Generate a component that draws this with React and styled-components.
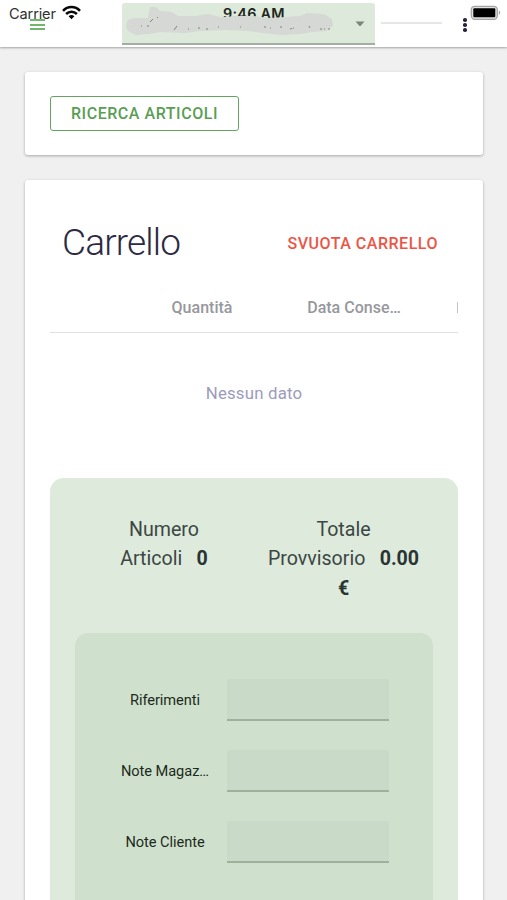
import React from 'react';
import styled, { createGlobalStyle } from 'styled-components';

const GlobalStyle = createGlobalStyle`
  * { box-sizing: border-box; }
  html, body { margin: 0; height: 900px; overflow: hidden; background: #f0f0f0; }
  body { font-family: Roboto, sans-serif; color: #2f3a38; }
`;

const Page = styled.div`
  position: relative;
  width: 507px;
  height: 900px;
  overflow: hidden;
  background: #f0f0f0;
`;

const Header = styled.header`
  display: flex;
  height: 47px;
  padding-left: 30px;
  background: #fff;
  box-shadow: 0 1px 2px rgba(0, 0, 0, 0.32);
`;

const MenuButton = styled.div`
  display: flex;
  flex-direction: column;
  gap: 2.5px;
  width: 15px;
  margin-top: 19px;
`;

const MenuBar = styled.span`
  height: 2px;
  background: #72b56e;
`;

const CustomerSelect = styled.div`
  width: 253px;
  height: 42px;
  margin: 3px 0 0 77px;
  border-bottom: 2px solid #a1aea1;
  border-radius: 3px 3px 0 0;
  background: #dde9da;
`;

const HeaderRule = styled.div`
  width: 61px;
  height: 2px;
  margin: 22px 0 0 6px;
  background: #e6e6e7;
`;

const MoreButton = styled.div`
  display: flex;
  flex-direction: column;
  gap: 1.5px;
  margin: 18px 0 0 21px;
`;

const Dot = styled.span`
  width: 3.6px;
  height: 3.6px;
  border-radius: 50%;
  background: #25263d;
`;

const StatusBar = styled.div`
  position: absolute;
  inset: 0 0 auto 0;
  height: 45px;
`;

const Carrier = styled.span`
  position: absolute;
  left: 9px;
  top: 5px;
  font: 14.6px/18px Inter, sans-serif;
  letter-spacing: -0.15px;
  color: #303030;
`;

const Clock = styled.span`
  position: absolute;
  left: 223px;
  top: 5px;
  font: 600 14.4px/18px Inter, sans-serif;
  letter-spacing: 0.25px;
  white-space: nowrap;
  color: #202520;
`;

const StatusIcon = styled.svg`
  position: absolute;
  left: ${(p) => p.$x}px;
  top: ${(p) => p.$y}px;
`;

const Main = styled.main`
  display: flex;
  flex-direction: column;
  gap: 25px;
  padding: 24.5px 24.5px 0 25px;
`;

const Card = styled.section`
  height: ${(p) => p.$height}px;
  padding: 24.5px 24.5px 24.5px 25px;
  border-radius: 3px;
  background: #fff;
  box-shadow: 0 1px 3px rgba(0, 0, 0, 0.3);
`;

const SearchButton = styled.button`
  display: block;
  width: 189px;
  height: 35px;
  padding: 0;
  border: 1.5px solid #65a361;
  border-radius: 3px;
  background: #fff;
  font: 500 16px/32px Roboto, sans-serif;
  letter-spacing: 0.55px;
  color: #5a9e54;
`;

const CartHeader = styled.div`
  display: flex;
  align-items: center;
  justify-content: space-between;
  height: 77px;
  padding: 0 20px 0 12px;
`;

const Title = styled.h1`
  margin: 0;
  font-size: 37px;
  font-weight: 300;
  letter-spacing: -0.85px;
  color: #2c2a43;
`;

const ClearButton = styled.button`
  padding: 2px 0 0;
  border: 0;
  background: none;
  font: 500 16px/24px Roboto, sans-serif;
  letter-spacing: 0.52px;
  color: #ec5546;
`;

const TableHead = styled.div`
  display: grid;
  grid-template-columns: 76px 152px 152px 152px;
  height: 52px;
  padding-top: 1px;
  overflow: hidden;
  border-bottom: 1.5px solid #e1e1e2;
  font-size: 16px;
  font-weight: 500;
  line-height: 51px;
  color: #96989c;
`;

const HeadCell = styled.span`
  text-align: center;
`;

/* Edge of the next column, visible where the table scrolls out of view */
const ColumnEdge = styled.span`
  width: 1px;
  height: 11px;
  margin: 20px 0 0 27px;
  background: #c3c4c7;
`;

const EmptyState = styled.div`
  height: 145px;
  padding-bottom: 26px;
  display: flex;
  align-items: center;
  justify-content: center;
  font-size: 16.8px;
  letter-spacing: 0.2px;
  color: #9c9bbb;
`;

const Summary = styled.div`
  height: 520px;
  padding: 37px 25px 0 24.5px;
  border-radius: 14px;
  background: #deeadc;
`;

const Totals = styled.div`
  display: grid;
  grid-template-columns: 179px 180px;
  height: 118px;
  font-size: 19.6px;
  line-height: 29.3px;
  text-align: center;
  color: #3b4744;
`;

const Total = styled.div`
  padding: 0 10px;
`;

const Amount = styled.b`
  margin-left: ${(p) => (p.$inline ? 9.5 : 0)}px;
  font-weight: 700;
  color: #2a3433;
`;

const Form = styled.div`
  display: flex;
  flex-direction: column;
  gap: 29px;
  height: 400px;
  padding: 45px 45px 0;
  border-radius: 13px;
  background: #cfe1cd;
`;

const Field = styled.label`
  display: grid;
  grid-template-columns: 91px 161.5px;
  column-gap: 16.5px;
  align-items: center;
  height: 42px;
  font-size: 14.6px;
  line-height: 20px;
  text-align: center;
  color: #1c2a20;
`;

const FieldName = styled.span`
  letter-spacing: -0.05px;
  white-space: nowrap;
`;

const FieldInput = styled.input`
  width: 161.5px;
  height: 42px;
  margin-top: 1px;
  padding: 0 12px;
  border: 0;
  border-bottom: 2px solid #9db19d;
  border-radius: 3px 3px 0 0;
  outline: 0;
  background: #c9dac8;
`;

const fields = ['Riferimenti', 'Note Magaz…', 'Note Cliente'];

export default function App() {
  return (
    <>
      <GlobalStyle />
      <Page>
        <Header>
          <MenuButton><MenuBar /><MenuBar /><MenuBar /></MenuButton>
          <CustomerSelect />
          <HeaderRule />
          <MoreButton><Dot /><Dot /><Dot /></MoreButton>
        </Header>
        <Main>
          <Card $height={83}>
            <SearchButton>RICERCA ARTICOLI</SearchButton>
          </Card>
          <Card $height={900}>
            <CartHeader>
              <Title>Carrello</Title>
              <ClearButton>SVUOTA CARRELLO</ClearButton>
            </CartHeader>
            <TableHead>
              <HeadCell />
              <HeadCell>Quantità</HeadCell>
              <HeadCell>Data Conse…</HeadCell>
              <ColumnEdge />
            </TableHead>
            <EmptyState>Nessun dato</EmptyState>
            <Summary>
              <Totals>
                <Total>Numero<br />Articoli <Amount $inline>0</Amount></Total>
                <Total>Totale<br />Provvisorio <Amount $inline>0.00</Amount><br /><Amount>€</Amount></Total>
              </Totals>
              <Form>
                {fields.map((name) => (
                  <Field key={name}><FieldName>{name}</FieldName><FieldInput /></Field>
                ))}
              </Form>
            </Summary>
          </Card>
        </Main>
        <StatusBar>
          <Carrier>Carrier</Carrier>
          <StatusIcon $x={62} $y={5} width="19" height="16" viewBox="0 0 19 16">
            <g fill="none" stroke="#080808" strokeWidth="2.5">
              <path d="M1 5.9C5.8 .8 13.2 .8 18 5.9" />
              <path d="M4.1 9C7.2 5.9 11.8 5.9 14.9 9" />
            </g>
            <path d="M6.6 11.2Q9.5 8.9 12.4 11.2L9.5 14.3Z" fill="#080808" />
          </StatusIcon>
          <Clock>9:46 AM</Clock>
          {/* Redaction scribble over the customer name */}
          <StatusIcon $x={122} $y={4} width="253" height="38" viewBox="122 4 253 38">
            <path d="M127 22Q128 18 137 18L148 18 150 7 156 7 160 11 172 12 178 16 196 16 208 14 220 17 240 16 253 16 270 18 300 16 307 13 324 14 332 19 333 26 326 31 312 32 300 34 282 35 263 33 248 31 225 30 200 31 185 33 160 32 149 34 136 35 128 31 126 26Z" fill="#d5d8d4" />
            <g fill="none" stroke="#7b847d" strokeWidth="1">
              <path d="M174 30l3-4M150 22l3-3" />
              <path d="M141 26h1M147 26h2M157 17l1 1M188 29h1M198 28h2M206 29h3M218 27h1M240 27h1M264 27h2M270 28h1M280 27h2M290 29l4-1M309 26l1 2M320 29h2M324 29h1M328 29h2" strokeDasharray="2 1" />
            </g>
            <path d="M355.5 21.5h9l-4.5 5z" fill="#7c867b" />
          </StatusIcon>
          <StatusIcon $x={470} $y={5} width="31" height="16" viewBox="0 0 31 16">
            <rect x="1.3" y="1.3" width="26" height="13" rx="3.5" fill="#e1e1e1" stroke="#a5a5a5" strokeWidth="1.3" />
            <rect x="3.3" y="3.3" width="22" height="9" rx="1" fill="#000" />
            <path d="M28.8 5.6q2.8 2.2 0 4.4z" fill="#a5a5a5" />
          </StatusIcon>
        </StatusBar>
      </Page>
    </>
  );
}
